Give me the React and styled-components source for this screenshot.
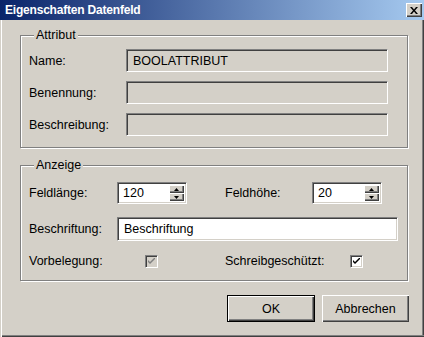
import React from 'react';
import styled, { createGlobalStyle } from 'styled-components';

const face = '#d4d0c8';

const GlobalStyle = createGlobalStyle`
  html, body {
    margin: 0;
    padding: 0;
    background: ${face};
  }
  body {
    font-family: "Liberation Sans", Arial, sans-serif;
    font-size: 12.5px;
    color: #000;
  }
`

const Window = styled.div`
  width: 424px;
  height: 337px;
  box-sizing: border-box;
  background: ${face};
  display: flex;
  flex-direction: column;
  box-shadow: inset 1px 0 0 ${face}, inset 2px 0 0 #fff,
    inset 0 -1px 0 #404040, inset 0 -2px 0 #808080,
    inset -1px 0 0 #404040, inset -2px 0 0 #808080;
`

const TitleBar = styled.div`
  height: 20px;
  display: flex;
  align-items: center;
  justify-content: space-between;
  padding: 0 2px 0 5px;
  background: linear-gradient(to right, #0a246a, #a6caf0);
`

const TitleText = styled.span`
  color: #fff;
  font-weight: bold;
  font-size: 12px;
  letter-spacing: -0.2px;
`

const CloseButton = styled.div`
  width: 16px;
  height: 14px;
  box-sizing: border-box;
  background: ${face};
  display: flex;
  align-items: center;
  justify-content: center;
  box-shadow: inset 1px 1px 0 #fff, inset -1px -1px 0 #404040,
    inset -2px -2px 0 #808080;
`

const Body = styled.div`
  display: flex;
  flex-direction: column;
  padding: 0 0 0 20px;
`

const Group = styled.fieldset`
  margin: ${p => p.$top}px 0 0 0;
  width: 388px;
  box-sizing: border-box;
  border: 1px solid #808080;
  box-shadow: 1px 1px 0 #fff, inset 1px 1px 0 #fff;
  padding: ${p => p.$pad};
  min-width: 0;
`

const Legend = styled.legend`
  margin-left: 5px;
  padding: 0 2px;
  line-height: 15px;
  background: ${face};
`

const Row = styled.div`
  display: flex;
  align-items: center;
  height: ${p => p.$h}px;
  margin-top: ${p => p.$gap || 0}px;
`

const Label = styled.span`
  width: ${p => p.$w}px;
  margin-left: ${p => p.$ml || 0}px;
  flex-shrink: 0;
  white-space: nowrap;
`

const Field = styled.div`
  width: ${p => p.$w}px;
  height: ${p => p.$h || 23}px;
  box-sizing: border-box;
  border: 1px solid;
  border-color: #808080 #fff #fff #808080;
  box-shadow: inset 1px 1px 0 #404040, inset -1px -1px 0 ${face};
  background: ${p => (p.$disabled ? face : '#fff')};
  display: flex;
  align-items: center;
  padding-left: ${p => p.$pl || 6}px;
  white-space: nowrap;
  overflow: hidden;
`

const SpinBox = styled(Field)`
  padding: 2px 2px 2px 5px;
  justify-content: space-between;
`

const SpinButtons = styled.div`
  display: flex;
  flex-direction: column;
  height: 100%;
  width: 15px;
`

const SpinButton = styled.div`
  flex: 1;
  background: ${face};
  display: flex;
  align-items: center;
  justify-content: center;
  box-shadow: inset 1px 1px 0 #fff, inset -1px -1px 0 #404040,
    inset -2px -2px 0 #808080;
`

const Check = styled.div`
  width: 13px;
  height: 13px;
  box-sizing: border-box;
  flex-shrink: 0;
  border: 1px solid;
  border-color: #808080 #fff #fff #808080;
  box-shadow: inset 1px 1px 0 #404040, inset -1px -1px 0 ${face};
  background: ${p => (p.$disabled ? face : '#fff')};
  display: flex;
  align-items: center;
  justify-content: center;
`

const ButtonRow = styled.div`
  display: flex;
  justify-content: flex-end;
  gap: 7px;
  margin-top: 14px;
  padding-right: 15px;
`

const Button = styled.div`
  width: ${p => p.$w}px;
  height: 27px;
  box-sizing: border-box;
  background: ${face};
  display: flex;
  align-items: center;
  justify-content: center;
  border: ${p => (p.$default ? '1px solid #000' : 'none')};
  box-shadow: inset 1px 1px 0 #fff, inset -1px -1px 0 #404040,
    inset -2px -2px 0 #808080;
`

const Arrow = ({ up }) => (
  <svg width="5" height="3" viewBox="0 0 5 3">
    <path d={up ? 'M2.5 0 L5 3 L0 3 Z' : 'M0 0 L5 0 L2.5 3 Z'} fill="#000" />
  </svg>
);

const Spinner = ({ value }) => (
  <SpinBox $w={70} $h={22}>
    <span>{value}</span>
    <SpinButtons>
      <SpinButton><Arrow up /></SpinButton>
      <SpinButton><Arrow /></SpinButton>
    </SpinButtons>
  </SpinBox>
);

const CheckMark = ({ color }) => (
  <svg width="7" height="7" viewBox="0 0 7 7">
    <path d="M0 2 L0 4 L2 6 L7 1 L7 -1 L2 4 Z" fill={color} />
  </svg>
);

export default function App() {
  return (
    <>
      <GlobalStyle />
      <Window>
        <TitleBar>
          <TitleText>Eigenschaften Datenfeld</TitleText>
          <CloseButton>
            <svg width="8" height="7" viewBox="0 0 8 7">
              <path d="M0 0 L2 0 L4 2.5 L6 0 L8 0 L5 3.5 L8 7 L6 7 L4 4.5 L2 7 L0 7 L3 3.5 Z" fill="#000" />
            </svg>
          </CloseButton>
        </TitleBar>
        <Body>
          <Group $top={8} $pad="6px 0 11px 8px">
            <Legend>Attribut</Legend>
            <Row $h={23}>
              <Label $w={97}>Name:</Label>
              <Field $w={262} $disabled>BOOLATTRIBUT</Field>
            </Row>
            <Row $h={23} $gap={9}>
              <Label $w={97}>Benennung:</Label>
              <Field $w={262} $disabled />
            </Row>
            <Row $h={23} $gap={9}>
              <Label $w={97}>Beschreibung:</Label>
              <Field $w={262} $disabled />
            </Row>
          </Group>
          <Group $top={10} $pad="9px 0 11px 8px">
            <Legend>Anzeige</Legend>
            <Row $h={22}>
              <Label $w={88}>Feldlänge:</Label>
              <Spinner value="120" />
              <Label $w={87} $ml={38}>Feldhöhe:</Label>
              <Spinner value="20" />
            </Row>
            <Row $h={24} $gap={13}>
              <Label $w={88}>Beschriftung:</Label>
              <Field $w={281} $h={24}>Beschriftung</Field>
            </Row>
            <Row $h={16} $gap={12}>
              <Label $w={116}>Vorbelegung:</Label>
              <Check $disabled><CheckMark color="#808080" /></Check>
              <Label $w={125} $ml={67}>Schreibgeschützt:</Label>
              <Check><CheckMark color="#000" /></Check>
            </Row>
          </Group>
        </Body>
        <ButtonRow>
          <Button $w={88} $default>OK</Button>
          <Button $w={87}>Abbrechen</Button>
        </ButtonRow>
      </Window>
    </>
  );
}
